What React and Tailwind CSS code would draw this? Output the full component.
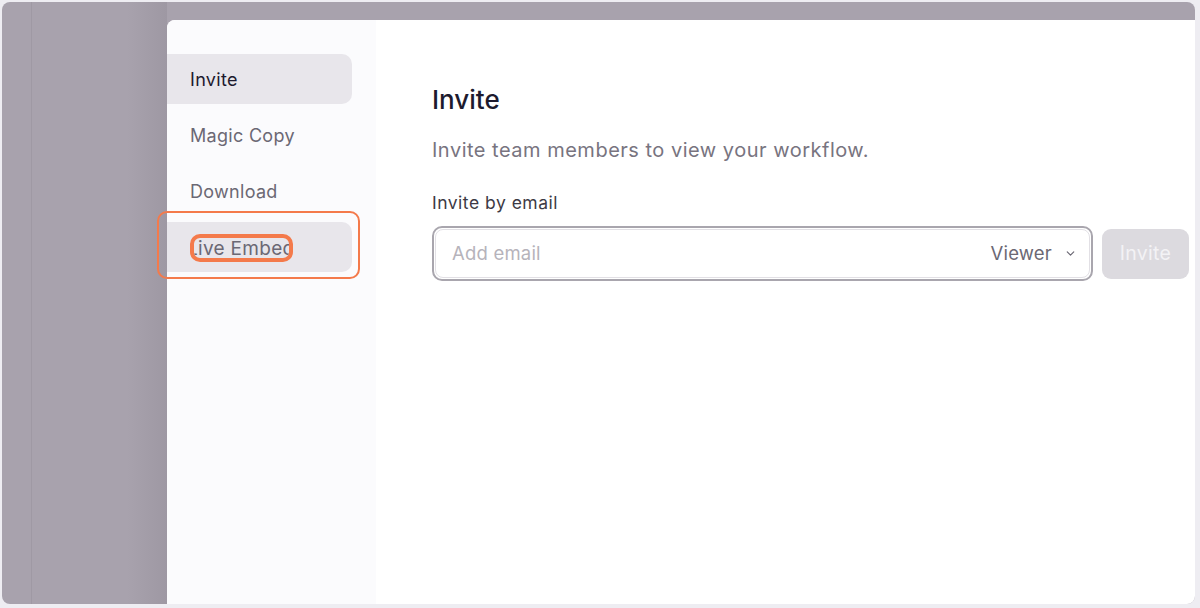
import { ChevronDown } from "lucide-react";

const font = { fontFamily: "Inter, 'Noto Sans', sans-serif" };

function NavItem({ label, active }) {
  return (
    <div
      className={
        "h-[50px] w-[185px] flex items-center pl-[23px] pt-[1px] rounded-r-[10px] text-[18px] tracking-[0.3px] " +
        (active ? "bg-[#e8e6eb] text-[#1d1a2e]" : "text-[#6b6874]")
      }
    >
      {label}
    </div>
  );
}

export default function App() {
  return (
    <div
      className="w-[1200px] h-[608px] bg-[#eeedf2] pl-[2px] pt-[2px] pr-[5px] pb-[4px]"
      style={font}
    >
      <div className="relative w-full h-full rounded-[8px] overflow-hidden bg-[#a8a2ad] flex">
        {/* backdrop with faint column line */}
        <div className="w-[165px] shrink-0 flex">
          <div className="w-[30px] border-r border-[#9f99a4]" />
          <div className="flex-1 bg-gradient-to-r from-transparent from-70% to-[#9e98a3]" />
        </div>

        {/* modal */}
        <div className="flex-1 mt-[18px] bg-white rounded-tl-[8px] flex">
          <div className="w-[209px] shrink-0 bg-[#fbfbfd] rounded-tl-[8px] pt-[34px] flex flex-col gap-[6px]">
            <NavItem label="Invite" active />
            <NavItem label="Magic Copy" />
            <NavItem label="Download" />
            <div className="relative">
              <NavItem label="" active />
              <div className="absolute left-[-10px] top-[-11px] w-[203px] h-[68px] border-2 border-[#f47a4b] rounded-[10px]" />
              <div className="absolute left-[23px] top-[12px] w-[103px] h-[28px] border-[4px] border-[#f47a4b] rounded-[10px] bg-[#e8e6eb] overflow-hidden flex items-center">
                <span className="ml-[-7px] text-[19px] tracking-[0.3px] text-[#6b6874] whitespace-nowrap leading-none">
                  Live Embed
                </span>
              </div>
            </div>
          </div>

          <div className="flex-1 pl-[56px] pt-[64px]">
            <h1 className="text-[26px] font-medium text-[#1d1a2e] leading-[32px]">Invite</h1>
            <p className="mt-[21px] text-[20px] tracking-[0.5px] text-[#78747f] leading-[26px]">
              Invite team members to view your workflow.
            </p>
            <div className="mt-[29px] text-[17.5px] tracking-[0.5px] text-[#3d3a45] leading-[22px]">
              Invite by email
            </div>
            <div className="mt-[12px] flex items-center gap-[9px]">
              <div className="w-[661px] h-[55px] rounded-[10px] border-2 border-[#a9a6ae] p-[1px]">
                <div className="h-full rounded-[8px] border border-[#e2e0e5] flex items-center pl-[16px] pr-[12px]">
                  <span className="flex-1 text-[18.5px] tracking-[0.2px] text-[#b6b3bb]">Add email</span>
                  <span className="text-[18.5px] tracking-[0.2px] text-[#6b6874]">Viewer</span>
                  <ChevronDown className="ml-[12px] w-[13px] h-[13px] text-[#6b6874]" strokeWidth={2.2} />
                </div>
              </div>
              <div className="w-[87px] h-[50px] rounded-[9px] bg-[#dcdadf] flex items-center justify-center text-[19.5px] tracking-[0.3px] text-[#f3f2f5]">
                Invite
              </div>
            </div>
          </div>
        </div>
      </div>
    </div>
  );
}
